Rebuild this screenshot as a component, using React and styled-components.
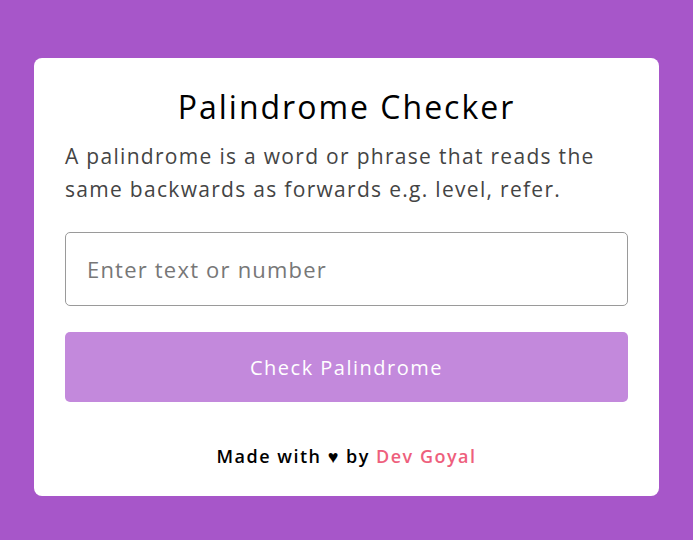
import React, {useState} from 'react'
import styled, {createGlobalStyle} from 'styled-components'

const GlobalStyle = createGlobalStyle`
    * {
        box-sizing: border-box;
    }
    body {
        margin: 0;
        background: #a756c9;
        font-family: "Open Sans", "Liberation Sans", sans-serif;
    }
`

const Page = styled.div`
    min-height: 540px;
    padding-top: 58px;
    display: flex;
    justify-content: center;
    align-items: flex-start;
`

const Card = styled.div`
    width: 625px;
    background: #fff;
    border-radius: 8px;
    padding: 28px 31px 28px;
    display: flex;
    flex-direction: column;
`

const Title = styled.h1`
    margin: 0;
    text-align: center;
    font-size: 32px;
    font-weight: 400;
    color: #000;
    line-height: 42px;
    letter-spacing: 2px;
`

const Description = styled.p`
    margin: 12px 0 0;
    font-size: 21px;
    line-height: 33px;
    color: #444;
    letter-spacing: 1.3px;
`

const Input = styled.input`
    margin-top: 26px;
    width: 100%;
    height: 74px;
    border: 1px solid #9a9a9a;
    border-radius: 5px;
    padding: 0 21px;
    font-family: inherit;
    font-size: 22px;
    letter-spacing: 1.2px;
    color: #333;
    outline: none;
    &::placeholder {
        color: #777;
    }
`

const Button = styled.button`
    margin-top: 26px;
    width: 100%;
    height: 70px;
    border: none;
    border-radius: 5px;
    background: ${p => (p.disabled ? '#c389dc' : '#a756c9')};
    color: #fff;
    font-family: inherit;
    font-size: 20px;
    letter-spacing: 1.5px;
    cursor: pointer;
`

const Footer = styled.p`
    margin: 42px 0 0;
    text-align: center;
    font-size: 18px;
    font-weight: 600;
    letter-spacing: 1.5px;
    color: #000;
`

const Author = styled.span`
    color: #ee5f7d;
`

const App = () => {
    const [text, setText] = useState('')

    return (
        <Page>
            <GlobalStyle />
            <Card>
                <Title>Palindrome Checker</Title>
                <Description>
                    A palindrome is a word or phrase that reads the same backwards as forwards e.g. level, refer.
                </Description>
                <Input
                    placeholder="Enter text or number"
                    value={text}
                    onChange={e => setText(e.target.value)}
                />
                <Button disabled={!text}>Check Palindrome</Button>
                <Footer>
                    Made with ♥ by <Author>Dev Goyal</Author>
                </Footer>
            </Card>
        </Page>
    )
}

export default App
